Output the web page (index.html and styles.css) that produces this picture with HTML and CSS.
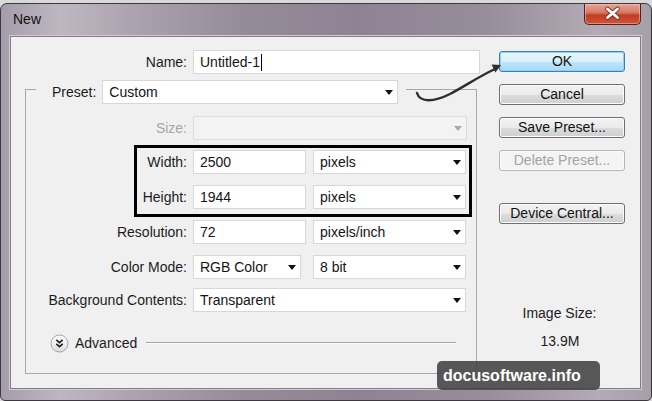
FILE: index.html
```html
<!DOCTYPE html>
<html>
    <head>
        <meta charset="utf-8">
        <title>New</title>
        <link rel="stylesheet" href="styles.css">
    </head>
    <body>
        <div class="window">
            <div class="title-bar">
                <span class="title">New</span>
                <div class="close-button">
                    <svg width="57" height="21" viewBox="0 0 57 21">
                        <path d="M23.5 6 L33.5 14.5 M33.5 6 L23.5 14.5" stroke="#7a3024" stroke-width="4.6" stroke-linecap="round"/>
                        <path d="M23.5 6 L33.5 14.5 M33.5 6 L23.5 14.5" stroke="#ffffff" stroke-width="2.8" stroke-linecap="round"/>
                    </svg>
                </div>
            </div>
            <div class="client">
                <div class="form-column">
                    <div class="row">
                        <span class="label">Name:</span>
                        <div class="field name-field">Untitled-1<span class="caret"></span></div>
                    </div>
                    <fieldset class="group">
                        <legend class="preset">
                            <span class="preset-label">Preset:</span>
                            <div class="select preset-select">Custom</div>
                        </legend>
                        <div class="row size-row">
                            <span class="label disabled">Size:</span>
                            <div class="select size-select disabled"></div>
                        </div>
                        <div class="dimensions">
                            <div class="row">
                                <span class="label">Width:</span>
                                <div class="field number">2500</div>
                                <div class="select unit">pixels</div>
                            </div>
                            <div class="row">
                                <span class="label">Height:</span>
                                <div class="field number">1944</div>
                                <div class="select unit">pixels</div>
                            </div>
                        </div>
                        <div class="row resolution-row">
                            <span class="label">Resolution:</span>
                            <div class="field number">72</div>
                            <div class="select unit">pixels/inch</div>
                        </div>
                        <div class="row color-row">
                            <span class="label">Color Mode:</span>
                            <div class="select mode-select">RGB Color</div>
                            <div class="select unit bits">8 bit</div>
                        </div>
                        <div class="row background-row">
                            <span class="label">Background Contents:</span>
                            <div class="select background-select">Transparent</div>
                        </div>
                        <div class="advanced">
                            <svg class="advanced-icon" width="19" height="19" viewBox="0 0 19 19">
                                <defs>
                                    <linearGradient id="knob" x1="0" y1="0" x2="0" y2="1">
                                        <stop offset="0" stop-color="#ffffff"/>
                                        <stop offset="1" stop-color="#dedede"/>
                                    </linearGradient>
                                </defs>
                                <circle cx="9.5" cy="9.5" r="8.5" fill="url(#knob)" stroke="#a3a3a3"/>
                                <path d="M6.3 5.8 L9.5 8.6 L12.7 5.8 M6.3 9.8 L9.5 12.6 L12.7 9.8" fill="none" stroke="#1e1e1e" stroke-width="1.6"/>
                            </svg>
                            <span class="advanced-text">Advanced</span>
                            <span class="advanced-line"></span>
                        </div>
                    </fieldset>
                </div>
                <div class="button-column">
                    <div class="btn default">OK</div>
                    <div class="btn">Cancel</div>
                    <div class="btn">Save Preset...</div>
                    <div class="btn disabled">Delete Preset...</div>
                    <div class="btn device">Device Central...</div>
                    <div class="image-size">Image Size:</div>
                    <div class="image-size-value">13.9M</div>
                </div>
            </div>
        </div>
        <svg class="arrow" width="95" height="45" viewBox="0 0 95 45">
            <path d="M7 33 C10 43 24 42 40 34 C55 26 70 16 84 9.5" fill="none" stroke="#2e2e2e" stroke-width="2.4" stroke-linecap="round"/>
            <polygon points="91,5 85.3,12.4 81.6,4.4" fill="#2e2e2e"/>
        </svg>
        <div class="watermark">docusoftware.info</div>
    </body>
</html>
```

FILE: styles.css
```css
body {
    margin: 0;
    position: relative;
    width: 652px;
    height: 401px;
    overflow: hidden;
    background-color: #d9d9d9;
    font-family: "Liberation Sans", Arial, sans-serif;
    font-size: 14px;
    color: #1c1c1c;
}

.window {
    box-sizing: border-box;
    height: 398px;
    margin-top: 3px;
    border: 1px solid #3c3a3e;
    border-radius: 7px 7px 5px 5px;
    padding: 0 10px 11px 9px;
    display: flex;
    flex-direction: column;
    background: linear-gradient(90deg, #a59da9 0%, #beb7c1 9%, #aaa0ad 22%, #958a98 38%, #8f8393 55%, #988d9b 75%, #b3abb6 92%, #a69ea9 100%);
}

.title-bar {
    height: 32px;
    flex-shrink: 0;
    display: flex;
    justify-content: space-between;
    align-items: flex-start;
}

.title {
    padding-left: 3px;
    line-height: 30px;
    color: #111;
}

.close-button {
    box-sizing: border-box;
    width: 57px;
    height: 21px;
    border: 1px solid #4e241d;
    border-top: none;
    border-radius: 0 0 5px 5px;
    background: linear-gradient(#e8a597 0%, #d77a66 42%, #c23d22 56%, #cf5538 100%);
    box-shadow: inset 0 0 0 1px rgba(255, 200, 190, 0.5);
}

.close-button svg {
    display: block;
    margin: -1px 0 0 -1px;
}

.client {
    flex: 1;
    display: flex;
    border: 1px solid #847c88;
    background-color: #f0f0f0;
    padding: 13px 0 0 14px;
    box-shadow: 0 0 0 1px #d2cbd5;
}

.form-column {
    width: 455px;
    flex-shrink: 0;
}

.row {
    display: flex;
    height: 24px;
}

.label {
    flex-shrink: 0;
    width: 162px;
    margin-right: 6px;
    text-align: right;
    line-height: 24px;
    white-space: nowrap;
}

.label.disabled {
    color: #a6a6a6;
}

.field,
.select {
    box-sizing: border-box;
    flex-shrink: 0;
    height: 24px;
    border: 1px solid #d7d7d7;
    background-color: #fff;
    padding-left: 6px;
    line-height: 22px;
    color: #141414;
    white-space: nowrap;
}

.select {
    position: relative;
}

.select::after {
    content: "";
    position: absolute;
    right: 4px;
    top: 9px;
    border-left: 4px solid transparent;
    border-right: 4px solid transparent;
    border-top: 5px solid #111;
}

.select.disabled {
    background-color: #f3f3f3;
    border-color: #dcdcdc;
}

.select.disabled::after {
    border-top-color: #a9a9a9;
}

.name-field {
    width: 287px;
}

.caret {
    display: inline-block;
    width: 1px;
    height: 17px;
    margin-left: 1px;
    background-color: #000;
    vertical-align: -4px;
}

.group {
    box-sizing: border-box;
    width: 452px;
    min-width: 0;
    margin: 6px 0 0 0;
    padding: 0 0 20px 0;
    border: 1px solid #a8a8a8;
}

.preset {
    display: flex;
    align-items: flex-start;
    height: 18px;
    margin-left: 10px;
    padding: 0 8px 0 16px;
}

.preset-label {
    line-height: 24px;
    margin-right: 6px;
}

.preset-select {
    width: 296px;
}

.group .label {
    width: 161px;
}

.size-row {
    margin-top: 18px;
}

.size-select {
    width: 274px;
}

.dimensions {
    box-sizing: border-box;
    width: 338px;
    margin: 5px 0 0 108px;
    border: 3px solid #000;
    padding: 2px 3px 5px 0;
    display: flex;
    flex-direction: column;
    gap: 11px;
}

.group .dimensions .label {
    width: 50px;
}

.number {
    width: 113px;
}

.unit {
    width: 153px;
    margin-left: 7px;
}

.resolution-row {
    margin-top: 3px;
}

.color-row {
    margin-top: 11px;
}

.mode-select {
    width: 108px;
}

.unit.bits {
    margin-left: 12px;
}

.background-row {
    margin-top: 9px;
}

.background-select {
    width: 273px;
}

.advanced {
    display: flex;
    align-items: center;
    height: 20px;
    margin-top: 21px;
    padding-left: 24px;
}

.advanced-icon {
    display: block;
    flex-shrink: 0;
}

.advanced-text {
    margin-left: 6px;
}

.advanced-line {
    flex: 1;
    margin: 0 20px 0 9px;
    border-top: 1px solid #a6a6a6;
    border-bottom: 1px solid #fdfdfd;
}

.button-column {
    width: 126px;
    margin-left: 19px;
    display: flex;
    flex-direction: column;
}

.btn {
    box-sizing: border-box;
    height: 21px;
    margin-top: 12px;
    border: 1px solid #707070;
    border-radius: 3px;
    background: linear-gradient(#f2f2f2 0%, #ebebeb 50%, #dddddd 51%, #cfcfcf 100%);
    box-shadow: inset 0 0 0 1px #fbfbfb;
    text-align: center;
    line-height: 19px;
    color: #111;
}

.btn.default {
    margin-top: 1px;
    border-color: #3c7fb1;
    background: linear-gradient(#e8f6fd 0%, #d9f0fc 50%, #bee6fd 51%, #a7d9f5 100%);
    box-shadow: inset 0 0 0 1px #8ed3f2;
}

.btn.disabled {
    color: #a3a3a3;
    border-color: #b5b5b5;
    background: #f4f4f4;
}

.btn.device {
    margin-top: 32px;
}

.image-size {
    margin-top: 81px;
    padding-right: 5px;
    text-align: center;
    line-height: 16px;
}

.image-size-value {
    margin-top: 12px;
    padding-right: 4px;
    text-align: center;
    line-height: 16px;
}

.arrow {
    position: absolute;
    left: 410px;
    top: 60px;
}

.watermark {
    position: absolute;
    left: 437px;
    top: 361px;
    width: 163px;
    height: 29px;
    box-sizing: border-box;
    padding-left: 6px;
    border-radius: 5px;
    background-color: rgba(70, 70, 70, 0.9);
    color: #fff;
    font-weight: bold;
    font-size: 16px;
    line-height: 29px;
}
```
